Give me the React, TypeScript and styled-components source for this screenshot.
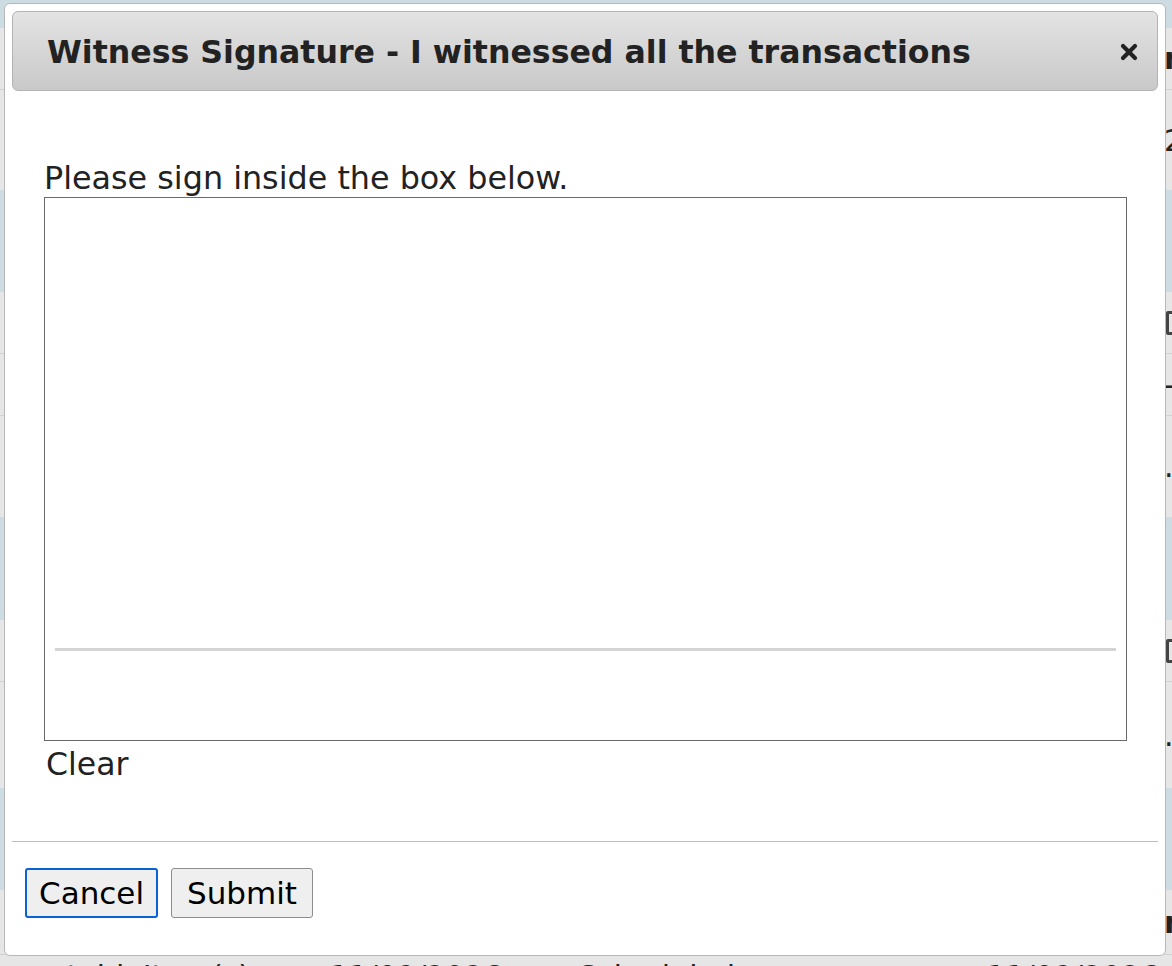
import React from 'react';
import styled, { createGlobalStyle } from 'styled-components';

const GlobalStyle = createGlobalStyle`
  html, body {
    margin: 0;
    padding: 0;
    width: 1172px;
    height: 966px;
    overflow: hidden;
    background: #e6e6e6;
    font-family: "DejaVu Sans", Verdana, sans-serif;
  }
`;

const Page = styled.div`
  position: relative;
  width: 1172px;
  height: 966px;
  overflow: hidden;
`;

/* ---------- background table peeking out behind the dialog ---------- */

const Table = styled.div`
  display: flex;
  flex-direction: column;
`;

const Row = styled.div<{ $h: number; $blue?: boolean; $line?: boolean }>`
  height: ${(p) => p.$h}px;
  box-sizing: border-box;
  background: ${(p) => (p.$blue ? '#cddce3' : '#e6e6e6')};
  border-bottom: ${(p) => (p.$line ? '1px solid #d2d2d2' : 'none')};
  display: grid;
  grid-template-columns: 1164px 1fr;
  align-items: center;
  font-size: 30px;
  color: #222;
`;

const EdgeCell = styled.div<{ $bold?: boolean }>`
  font-weight: ${(p) => (p.$bold ? 'bold' : 'normal')};
  white-space: nowrap;
`;

const EdgeBox = styled.div`
  width: 18px;
  height: 18px;
  border: 3px solid #444;
  border-radius: 2px;
  margin-left: 2px;
`;

const FooterRow = styled.div`
  height: 40px;
  background: #e6e6e6;
  display: flex;
  align-items: flex-start;
  padding-top: 4px;
  font-size: 30px;
  color: #222;
  white-space: nowrap;
`;

const FooterCell = styled.span<{ $w: number }>`
  display: inline-block;
  width: ${(p) => p.$w}px;
`;

/* ---------- dialog ---------- */

const Dialog = styled.div`
  position: absolute;
  left: 4px;
  top: 3px;
  width: 1162px;
  height: 953px;
  box-sizing: border-box;
  background: #fff;
  border: 1px solid #b8b8b8;
  border-radius: 6px;
  padding: 7px;
  display: flex;
  flex-direction: column;
`;

const TitleBar = styled.div`
  height: 80px;
  box-sizing: border-box;
  border: 1px solid #b3b3b3;
  border-radius: 6px;
  background: linear-gradient(#e3e3e3, #c9c9c9);
  display: flex;
  align-items: center;
  justify-content: space-between;
  padding: 2px 18px 0 34px;
`;

const Title = styled.span`
  font-weight: bold;
  font-size: 31.6px;
  color: #222;
`;

const CloseButton = styled.button`
  border: none;
  background: transparent;
  padding: 0;
  width: 20px;
  height: 20px;
  display: flex;
  align-items: center;
  justify-content: center;
  cursor: pointer;
`;

const Content = styled.div`
  flex: 1;
  padding: 68px 31px 0 32px;
  display: flex;
  flex-direction: column;
`;

const Prompt = styled.div`
  font-size: 31.8px;
  line-height: 38px;
  color: #222;
`;

const SignBox = styled.div`
  height: 544px;
  box-sizing: border-box;
  border: 1px solid #6a6a6a;
  display: flex;
  flex-direction: column;
  justify-content: flex-end;
  padding: 0 10px 89px 10px;
`;

const SignLine = styled.div`
  height: 3px;
  background: #d4d4d4;
`;

const ClearLink = styled.a`
  font-size: 31.5px;
  line-height: 34px;
  margin-top: 6px;
  padding-left: 2px;
  color: #222;
  text-decoration: none;
  cursor: pointer;
`;

const ButtonPane = styled.div`
  border-top: 1px solid #bdbdbd;
  height: 107px;
  box-sizing: border-box;
  display: flex;
  gap: 13px;
  padding: 26px 0 0 13px;
  align-items: flex-start;
`;

const Button = styled.button<{ $focused?: boolean }>`
  height: 50px;
  box-sizing: border-box;
  padding: ${(p) => (p.$focused ? '0 12px' : '0 15px')};
  font-family: "DejaVu Sans", Verdana, sans-serif;
  font-size: 31px;
  color: #000;
  background: #efefef;
  border: ${(p) => (p.$focused ? '2px solid #0b62d6' : '1px solid #8d8d8d')};
  border-radius: 3px;
  cursor: pointer;
`;

const CloseIcon: React.FC = () => (
  <svg width="18" height="18" viewBox="0 0 18 18">
    <path d="M3 3 L15 15 M15 3 L3 15" stroke="#222" strokeWidth="4.2" strokeLinecap="round" />
  </svg>
);

const rows: { h: number; blue?: boolean; line?: boolean; edge?: React.ReactNode }[] = [
  { h: 28, blue: true },
  { h: 62, line: true, edge: <EdgeCell $bold>n</EdgeCell> },
  { h: 100, edge: <EdgeCell>2</EdgeCell> },
  { h: 102, blue: true },
  { h: 62, line: true, edge: <EdgeBox /> },
  { h: 62, line: true, edge: <EdgeCell>-</EdgeCell> },
  { h: 101, edge: <EdgeCell>.</EdgeCell> },
  { h: 103, blue: true },
  { h: 62, line: true, edge: <EdgeBox /> },
  { h: 106, edge: <EdgeCell>.</EdgeCell> },
  { h: 102, blue: true },
  { h: 65, line: true, edge: <EdgeCell $bold>n</EdgeCell> },
];

const App: React.FC = () => {
  return (
    <Page>
      <GlobalStyle />
      <Table>
        {rows.map((r, i) => (
          <Row key={i} $h={r.h} $blue={r.blue} $line={r.line}>
            <div />
            {r.edge ?? <div />}
          </Row>
        ))}
        <FooterRow>
          <FooterCell $w={355}>&nbsp;&nbsp;&nbsp;&nbsp;&nbsp;ntableItem(s)</FooterCell>
          <FooterCell $w={268}>11/09/2026</FooterCell>
          <FooterCell $w={440}>Scheduled</FooterCell>
          <FooterCell $w={200}>11/09/2026</FooterCell>
        </FooterRow>
      </Table>

      <Dialog role="dialog">
        <TitleBar>
          <Title>Witness Signature - I witnessed all the transactions</Title>
          <CloseButton aria-label="Close">
            <CloseIcon />
          </CloseButton>
        </TitleBar>
        <Content>
          <Prompt>Please sign inside the box below.</Prompt>
          <SignBox>
            <SignLine />
          </SignBox>
          <ClearLink>Clear</ClearLink>
        </Content>
        <ButtonPane>
          <Button $focused>Cancel</Button>
          <Button>Submit</Button>
        </ButtonPane>
      </Dialog>
    </Page>
  );
};

export default App;
